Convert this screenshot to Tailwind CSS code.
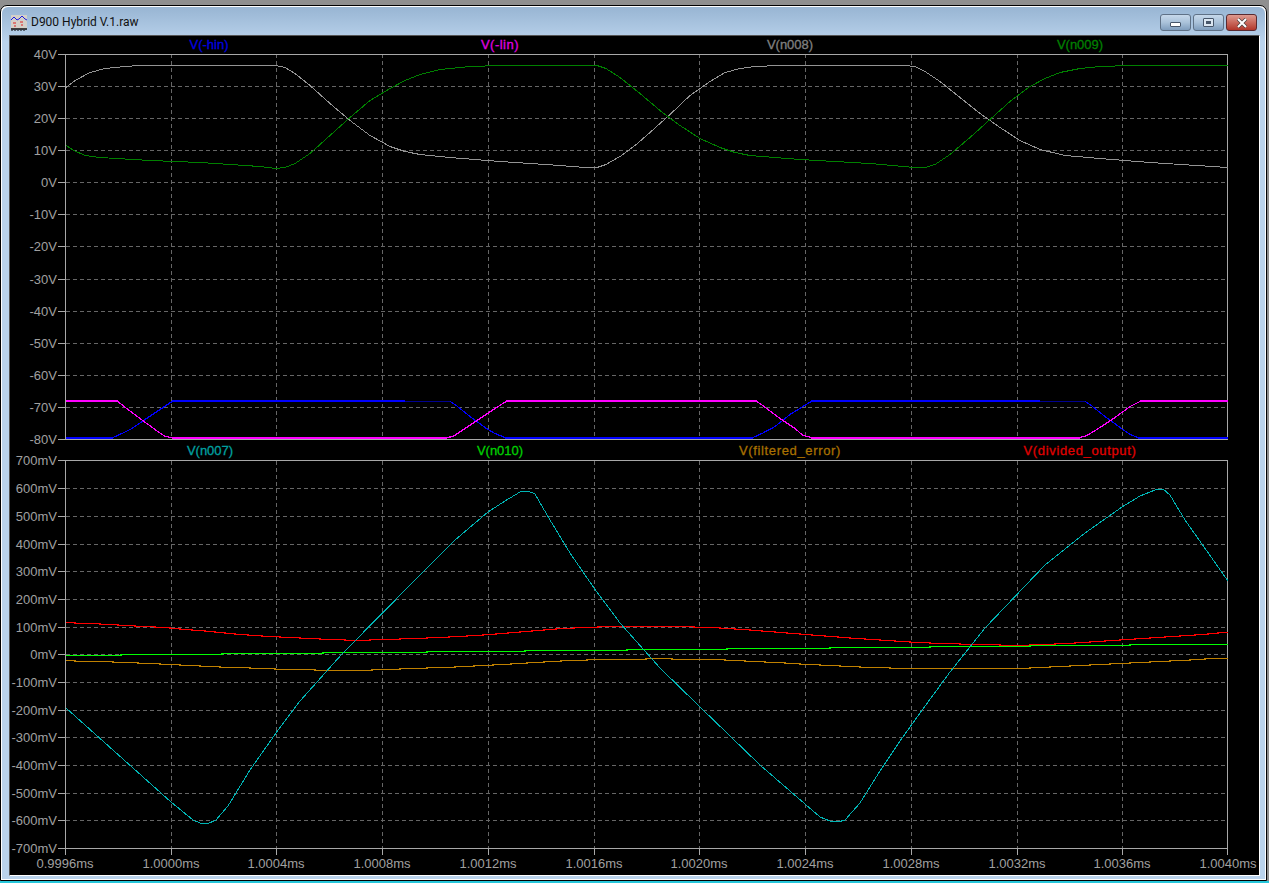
<!DOCTYPE html>
<html lang="en">
  <head>
    <meta charset="UTF-8" />
    <title>D900 Hybrid V.1.raw</title>
    <script src="https://cdn.jsdelivr.net/npm/@tailwindcss/browser@4"></script>
  </head>
  <body class="h-[883px] w-[1269px] overflow-hidden bg-[#8f8f8f] font-['Liberation_Sans',Arial,sans-serif]">
    <!-- window frame -->
    <div class="h-[883px] w-[1269px] pt-[5px] border-b-2 border-b-[#26c6da]">
      <div class="h-[876px] w-[1267px] rounded-t-[7px] border border-black bg-white p-px">
        <div class="flex h-full flex-col rounded-t-[6px] bg-gradient-to-b from-[#98b5d3] to-[#bad3ec] from-0% to-[4%] pl-[7px] pr-[5px] pb-[3px]">
          <!-- title bar -->
          <div class="flex h-[28px] shrink-0 items-center pl-[2px]">
            <svg class="mt-[2px]" width="16" height="17" viewBox="0 0 16 17">
              <rect x="0" y="1" width="16" height="14" fill="#d4d0c8" />
              <path d="M0 6l3-3 3 3 2-1 3-3 3 3 2 1" fill="none" stroke="#1c1ce0" stroke-width="1" />
              <path d="M2 9h3M9 8h3M3 12h2M10 11h2" stroke="#e02020" stroke-width="1" />
              <path d="M0 15h16" stroke="#000" stroke-width="1.4" />
              <path d="M1 16v1M4 16v1M7 16v1M10 16v1M13 16v1" stroke="#000" />
            </svg>
            <span class="ml-[4px] mt-[1px] font-['Roboto',sans-serif] text-[12px] text-[#111]">D900 Hybrid V.1.raw</span>
            <!-- caption buttons -->
            <div class="ml-auto mr-[3px] flex gap-[2px] self-start pt-[7px]">
              <div class="flex h-[17px] w-[31px] items-center justify-center rounded-[3px] border border-[#5f7186] bg-gradient-to-b from-[#c6d8ea] via-[#aac2da] via-50% to-[#7f9dbd]">
                <div class="mt-[3px] h-[5px] w-[11px] rounded-[1px] border border-[#47566a] bg-white"></div>
              </div>
              <div class="flex h-[17px] w-[31px] items-center justify-center rounded-[3px] border border-[#5f7186] bg-gradient-to-b from-[#c6d8ea] via-[#aac2da] via-50% to-[#7f9dbd]">
                <div class="flex h-[9px] w-[11px] items-center justify-center rounded-[1px] border border-[#47566a] bg-[#dbe6f1]">
                  <div class="h-[3px] w-[5px] bg-[#47566a]"></div>
                </div>
              </div>
              <div class="flex h-[17px] w-[31px] items-center justify-center rounded-[3px] border border-[#5a2a30] bg-gradient-to-b from-[#dd9a90] via-[#c9685c] via-50% to-[#b1352a]">
                <svg width="12" height="10" viewBox="0 0 12 10">
                  <path d="M2 1l8 8M10 1l-8 8" stroke="#47403f" stroke-width="3.4" />
                  <path d="M2 1l8 8M10 1l-8 8" stroke="#fff" stroke-width="2" />
                </svg>
              </div>
            </div>
          </div>

          <!-- plot panes -->
          <div class="flex flex-1 flex-col border border-[#555] border-r-white border-b-white bg-black">
            <svg class="block overflow-visible" width="1249" height="410" viewBox="10 36 1249 410" font-size="13" fill="#a0a0a0" shape-rendering="crispEdges">
              <!-- grid -->
              <g stroke="#666" stroke-dasharray="4 3" fill="none">
                <path d="M171.5 54V439M276.5 54V439M382.5 54V439M488.5 54V439M594.5 54V439M699.5 54V439M805.5 54V439M911.5 54V439M1017.5 54V439M1122.5 54V439" />
                <path d="M66 86.5H1228M66 118.5H1228M66 150.5H1228M66 182.5H1228M66 214.5H1228M66 246.5H1228M66 279.5H1228M66 311.5H1228M66 343.5H1228M66 375.5H1228M66 407.5H1228" />
              </g>
              <!-- axes -->
              <rect x="65.5" y="54.5" width="1162" height="384.5" fill="none" stroke="#a8a8a8" />
              <path stroke="#a8a8a8" d="M58 54.5H66M58 86.5H66M58 118.5H66M58 150.5H66M58 182.5H66M58 214.5H66M58 246.5H66M58 279.5H66M58 311.5H66M58 343.5H66M58 375.5H66M58 407.5H66M58 439.5H66" />
              <!-- traces -->
              <g fill="none">
                <polyline stroke="#949494" points="66,87.5 75,80.5 90,72.5 105,68.5 125,66.5 140,65.5 276,65.5 285,67.5 295,73.5 310,85.5 330,103.5 350,120.5 370,135.5 390,146.5 405,151.5 420,154.5 450,157.5 500,161.5 560,165.5 585,167.5 597,167.5 606,164.5 620,156.5 635,145.5 650,132.5 670,114.5 690,95.5 710,81.5 725,72.5 740,68.5 755,66.5 780,65.5 905,65.5 915,66.5 925,71.5 940,81.5 960,97.5 980,113.5 1000,127.5 1020,140.5 1040,149.5 1065,155.5 1100,158.5 1150,162.5 1228,167.5" />
                <polyline stroke="#008000" points="66,145.5 74,150.5 85,155.5 100,157.5 150,160.5 200,162.5 260,166.5 276,168.5 285,167.5 295,163.5 310,153.5 330,135.5 350,117.5 370,100.5 390,88.5 405,80.5 420,74.5 440,69.5 470,66.5 500,65.5 597,65.5 606,68.5 620,77.5 640,93.5 660,110.5 680,125.5 700,138.5 720,147.5 735,152.5 750,155.5 800,159.5 870,163.5 915,167.5 925,167.5 935,164.5 950,154.5 970,137.5 990,119.5 1010,101.5 1030,86.5 1045,78.5 1060,72.5 1080,68.5 1100,66.5 1130,65.5 1228,65.5" />
                <polyline stroke="#0000ff" stroke-width="1.2" points="113,437.5 122,433.5 132,428.5 145,419.5 160,409.5 172,401.5" />
                <polyline stroke="#0000ff" stroke-width="1.2" points="450,401.5 455,404.5 470,416.5 485,427.5 495,433.5 505,437.5" />
                <polyline stroke="#0000ff" stroke-width="1.2" points="753,437.5 762,433.5 775,426.5 790,414.5 811,401.5" />
                <polyline stroke="#0000ff" stroke-width="1.2" points="1085,401.5 1090,404.5 1105,416.5 1120,427.5 1130,434.5 1138,437.5" />
                <path stroke="#0000ff" stroke-width="2" d="M172 401H405M811 401H1040M66 438H113M505 438H753M1138 438H1228" />
                <path stroke="#000090" d="M405 401.5H450M1040 401.5H1085" />
                <polyline stroke="#ff00ff" stroke-width="1.2" points="118,401.5 124,406.5 140,418.5 155,429.5 165,436.5 172,437.5" />
                <polyline stroke="#ff00ff" stroke-width="1.2" points="447,437.5 453,436.5 465,428.5 480,418.5 495,408.5 506,401.5" />
                <polyline stroke="#ff00ff" stroke-width="1.2" points="757,401.5 764,406.5 780,418.5 795,428.5 803,435.5 811,437.5" />
                <polyline stroke="#ff00ff" stroke-width="1.2" points="1080,437.5 1087,435.5 1100,427.5 1115,417.5 1130,406.5 1140,401.5" />
                <path stroke="#ff00ff" stroke-width="2" d="M66 401H118M506 401H757M1140 401H1228M172 438H447M811 438H1080" />
              </g>
              <!-- y axis labels -->
              <g text-anchor="end">
                <text x="57" y="59">40V</text>
                <text x="57" y="91">30V</text>
                <text x="57" y="123">20V</text>
                <text x="57" y="155">10V</text>
                <text x="57" y="187">0V</text>
                <text x="57" y="219">-10V</text>
                <text x="57" y="251">-20V</text>
                <text x="57" y="284">-30V</text>
                <text x="57" y="316">-40V</text>
                <text x="57" y="348">-50V</text>
                <text x="57" y="380">-60V</text>
                <text x="57" y="412">-70V</text>
                <text x="57" y="444">-80V</text>
              </g>
              <!-- trace names -->
              <g text-anchor="middle" stroke-width="0.3">
                <text x="209" y="49" fill="#0000e0" stroke="#0000e0">V(-hin)</text>
                <text x="500" y="49" letter-spacing="0.5" fill="#e000e0" stroke="#e000e0">V(-lin)</text>
                <text x="790" y="49" fill="#808080" stroke="#808080">V(n008)</text>
                <text x="1080" y="49" fill="#008000" stroke="#008000">V(n009)</text>
              </g>
            </svg>

            <svg class="block overflow-visible" width="1249" height="429" viewBox="10 446 1249 429" font-size="13" fill="#a0a0a0" shape-rendering="crispEdges">
              <!-- grid -->
              <g stroke="#666" stroke-dasharray="4 3" fill="none">
                <path d="M171.5 461V848M276.5 461V848M382.5 461V848M488.5 461V848M594.5 461V848M699.5 461V848M805.5 461V848M911.5 461V848M1017.5 461V848M1122.5 461V848" />
                <path d="M66 488.5H1228M66 516.5H1228M66 544.5H1228M66 571.5H1228M66 599.5H1228M66 627.5H1228M66 654.5H1228M66 682.5H1228M66 710.5H1228M66 737.5H1228M66 765.5H1228M66 793.5H1228M66 820.5H1228" />
              </g>
              <!-- axes -->
              <rect x="65.5" y="460.5" width="1162" height="388" fill="none" stroke="#a8a8a8" />
              <path stroke="#a8a8a8" d="M58 460.5H66M58 488.5H66M58 516.5H66M58 544.5H66M58 571.5H66M58 599.5H66M58 627.5H66M58 654.5H66M58 682.5H66M58 710.5H66M58 737.5H66M58 765.5H66M58 793.5H66M58 820.5H66M58 848.5H66" />
              <path stroke="#a8a8a8" d="M65.5 848V855M171.5 848V855M276.5 848V855M382.5 848V855M488.5 848V855M594.5 848V855M699.5 848V855M805.5 848V855M911.5 848V855M1017.5 848V855M1122.5 848V855M1227.5 848V855" />
              <!-- traces -->
              <g fill="none" stroke-width="1.3">
                <path stroke="#ff0000" d="M66 622.5H75V623.5H100V624.5H118V625.5H135V626.5H155V627.5H170V628.5H180V629.5H192V630.5H205V631.5H215V632.5H225V633.5H235V634.5H248V635.5H262V636.5H280V637.5H300V638.5H320V639.5H345V640.5H370V639.5H400V638.5H427V637.5H449V636.5H467V635.5H483V634.5H496V633.5H508V632.5H520V631.5H532V630.5H544V629.5H556V628.5H574V627.5H598V626.5H694V627.5H720V628.5H735V629.5H750V630.5H762V631.5H775V632.5H787V633.5H800V634.5H812V635.5H825V636.5H838V637.5H850V638.5H865V639.5H880V640.5H895V641.5H910V642.5H930V643.5H960V644.5H1000V645.5H1030V644.5H1055V643.5H1075V642.5H1090V641.5H1105V640.5H1120V639.5H1135V638.5H1150V637.5H1165V636.5H1180V635.5H1195V634.5H1208V633.5H1218V632.5H1228" />
                <path stroke="#00ff00" d="M66 655.5H121V654.5H222V653.5H323V652.5H427V651.5H525V650.5H627V649.5H727V648.5H830V647.5H930V646.5H1030V645.5H1130V644.5H1228" />
                <path stroke="#bf8000" d="M66 660.5H75V661.5H113V662.5H138V663.5H160V664.5H180V665.5H200V666.5H220V667.5H250V668.5H275V669.5H315V670.5H372V669.5H400V668.5H427V667.5H455V666.5H474V665.5H493V664.5H511V663.5H527V662.5H544V661.5H561V660.5H587V659.5H646V658.5H672V659.5H725V660.5H745V661.5H765V662.5H785V663.5H800V664.5H820V665.5H840V666.5H860V667.5H890V668.5H1030V667.5H1050V666.5H1070V665.5H1090V664.5H1110V663.5H1130V662.5H1150V661.5H1170V660.5H1190V659.5H1205V658.5H1228" />
                <polyline stroke="#00b4b4" stroke-width="1" points="66,708 171,802 193,820 200,823 208,823.5 216,820 228,806 250,770 276,733 300,701 342,654 420,575 455,540 488,512 505,501 520,492 528,491 535,494 550,520 570,553 594,588 620,623 660,668 699,706 760,765 820,817 830,821 838,822 845,820 860,803 880,771 900,741 920,713 950,672 985,628 1045,565 1085,533 1122,507 1140,496 1155,490 1163,489 1170,495 1185,520 1228,581" />
              </g>
              <!-- y axis labels -->
              <g text-anchor="end">
                <text x="57" y="465">700mV</text>
                <text x="57" y="493">600mV</text>
                <text x="57" y="521">500mV</text>
                <text x="57" y="549">400mV</text>
                <text x="57" y="576">300mV</text>
                <text x="57" y="604">200mV</text>
                <text x="57" y="632">100mV</text>
                <text x="57" y="659">0mV</text>
                <text x="57" y="687">-100mV</text>
                <text x="57" y="715">-200mV</text>
                <text x="57" y="742">-300mV</text>
                <text x="57" y="770">-400mV</text>
                <text x="57" y="798">-500mV</text>
                <text x="57" y="825">-600mV</text>
                <text x="57" y="853">-700mV</text>
              </g>
              <!-- x axis labels -->
              <g text-anchor="middle">
                <text x="65" y="868">0.9996ms</text>
                <text x="171" y="868">1.0000ms</text>
                <text x="276" y="868">1.0004ms</text>
                <text x="382" y="868">1.0008ms</text>
                <text x="488" y="868">1.0012ms</text>
                <text x="594" y="868">1.0016ms</text>
                <text x="699" y="868">1.0020ms</text>
                <text x="805" y="868">1.0024ms</text>
                <text x="911" y="868">1.0028ms</text>
                <text x="1017" y="868">1.0032ms</text>
                <text x="1122" y="868">1.0036ms</text>
                <text x="1228" y="868">1.0040ms</text>
              </g>
              <!-- trace names -->
              <g text-anchor="middle" stroke-width="0.3">
                <text x="210" y="455" fill="#00a0a0" stroke="#00a0a0">V(n007)</text>
                <text x="500" y="455" fill="#00d000" stroke="#00d000">V(n010)</text>
                <text x="790" y="455" letter-spacing="0.65" fill="#a87000" stroke="#a87000">V(filtered_error)</text>
                <text x="1080" y="455" letter-spacing="0.65" fill="#e00000" stroke="#e00000">V(divided_output)</text>
              </g>
            </svg>
          </div>
        </div>
      </div>
    </div>
  </body>
</html>
